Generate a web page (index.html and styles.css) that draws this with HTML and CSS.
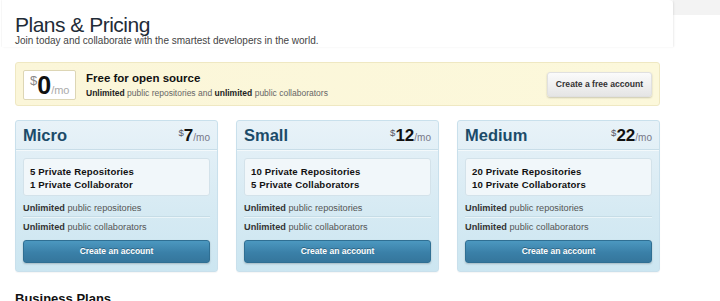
FILE: index.html
```html
<!DOCTYPE html>
<html>
<head>
<meta charset="utf-8">
<link rel="stylesheet" href="styles.css">
</head>
<body>
<div class="top">
  <div class="hero">
    <h1 class="title">Plans &amp; Pricing</h1>
    <p class="lead">Join today and collaborate with the smartest developers in the world.</p>
  </div>
  <div class="side"></div>
</div>

<div class="content">
  <div class="free">
    <div class="freeprice"><span class="cur">$</span><span class="amt">0</span><span class="per">/mo</span></div>
    <div class="freetext">
      <div class="freetitle">Free for open source</div>
      <div class="freesub"><b>Unlimited</b> public repositories and <b>unlimited</b> public collaborators</div>
    </div>
    <a class="btn-free">Create a free account</a>
  </div>

  <div class="plans">
    <div class="plan">
      <div class="plan-head"><span class="plan-name">Micro</span><span class="plan-price"><span class="cur">$</span><span class="amt">7</span><span class="per">/mo</span></span></div>
      <div class="features"><div>5 Private Repositories</div><div>1 Private Collaborator</div></div>
      <div class="row"><b>Unlimited</b> public repositories</div>
      <div class="row last"><b>Unlimited</b> public collaborators</div>
      <a class="btn-plan">Create an account</a>
    </div>
    <div class="plan">
      <div class="plan-head"><span class="plan-name">Small</span><span class="plan-price"><span class="cur">$</span><span class="amt">12</span><span class="per">/mo</span></span></div>
      <div class="features"><div>10 Private Repositories</div><div>5 Private Collaborators</div></div>
      <div class="row"><b>Unlimited</b> public repositories</div>
      <div class="row last"><b>Unlimited</b> public collaborators</div>
      <a class="btn-plan">Create an account</a>
    </div>
    <div class="plan">
      <div class="plan-head"><span class="plan-name">Medium</span><span class="plan-price"><span class="cur">$</span><span class="amt">22</span><span class="per">/mo</span></span></div>
      <div class="features"><div>20 Private Repositories</div><div>10 Private Collaborators</div></div>
      <div class="row"><b>Unlimited</b> public repositories</div>
      <div class="row last"><b>Unlimited</b> public collaborators</div>
      <a class="btn-plan">Create an account</a>
    </div>
  </div>

  <h2 class="biz">Business Plans</h2>
</div>
</body>
</html>
```
FILE: styles.css
```css
html, body {
  margin: 0;
  padding: 0;
  background: #fff;
  font-family: "Liberation Sans", Arial, sans-serif;
  color: #333;
  overflow: hidden;
}

.top {
  display: flex;
  height: 47px;
}

.hero {
  width: 671px;
  margin-left: 2px;
  padding-left: 13px;
  box-sizing: border-box;
  background: #fff;
  border-top-right-radius: 4px;
  box-shadow: 1px 0 2px rgba(0,0,0,0.08), -1px 0 1px rgba(0,0,0,0.03);
  position: relative;
  z-index: 1;
}

.side {
  flex: 1;
  background: #fff;
  border-top: 15px solid #f3f3f3;
  box-sizing: border-box;
}

.title {
  margin: 0;
  padding-top: 14px;
  font-size: 21px;
  line-height: 22px;
  font-weight: normal;
  color: #1f2c37;
  letter-spacing: -0.5px;
}

.lead {
  margin: -1px 0 0;
  font-size: 10px;
  line-height: 12px;
  color: #444;
}

.content {
  padding: 15px 60px 0 15px;
}

.free {
  display: flex;
  align-items: center;
  height: 44px;
  box-sizing: border-box;
  padding: 0 7px;
  background: linear-gradient(90deg, #fbf6d9, #fcf8db);
  border: 1px solid #efe8c2;
  border-radius: 3px;
}

.freeprice {
  width: 53px;
  height: 30px;
  box-sizing: border-box;
  margin-top: 1px;
  background: #fff;
  border: 1px solid #ddd6b5;
  border-radius: 2px;
  display: flex;
  align-items: flex-end;
  padding: 0 0 3px 6px;
  line-height: 1;
}
.freeprice .cur { font-size: 13px; color: #888; align-self: flex-start; margin-top: 3px; }
.freeprice .amt { font-size: 25px; font-weight: bold; color: #111; line-height: 22px; }
.freeprice .per { font-size: 11px; color: #aaa; }

.freetext {
  margin-left: 10px;
  flex: 1;
}
.freetitle {
  font-size: 11.5px;
  font-weight: bold;
  color: #111;
  line-height: 14px;
}
.freesub {
  font-size: 8.5px;
  color: #666;
  margin-top: 3px;
}
.freesub b { color: #222; }

.btn-free {
  display: block;
  width: 105px;
  height: 25px;
  box-sizing: border-box;
  line-height: 23px;
  text-align: center;
  font-size: 8.6px;
  font-weight: bold;
  color: #333;
  background: linear-gradient(#fbfbfb, #e5e5e5);
  border: 1px solid #e0e0e0;
  border-radius: 3px;
  box-shadow: 0 1px 2px rgba(0,0,0,0.2);
  margin-top: 1px;
}

.plans {
  display: flex;
  gap: 18px;
  margin-top: 14px;
}

.plan {
  width: 203px;
  height: 152px;
  box-sizing: border-box;
  background: linear-gradient(#e8f2f8, #d6eaf3 60%, #cce6f1);
  border: 1px solid #c9e0ec;
  border-radius: 3px;
  padding: 0 7px;
  box-shadow: 0 1px 1px rgba(0,0,0,0.04);
}

.plan-head {
  display: flex;
  justify-content: space-between;
  align-items: baseline;
  height: 29px;
  box-sizing: border-box;
  margin: 0 -7px;
  padding: 5px 7px 0;
  border-bottom: 1px solid #c8dde8;
  box-shadow: 0 1px 0 rgba(255,255,255,0.6);
}
.plan-name {
  font-size: 16.5px;
  font-weight: bold;
  color: #1c4b69;
}
.plan-price .cur { font-size: 9.5px; color: #556; vertical-align: 5px; }
.plan-price .amt { font-size: 17px; font-weight: bold; color: #111; }
.plan-price .per { font-size: 10px; color: #778; }

.features {
  margin-top: 8px;
  height: 38px;
  box-sizing: border-box;
  background: #f1f7fa;
  border: 1px solid #d3e2ea;
  border-radius: 3px;
  padding: 6px 6px 0;
  font-size: 9.6px;
  font-weight: bold;
  color: #111;
  line-height: 13px;
  letter-spacing: 0.15px;
}

.row {
  font-size: 9.2px;
  color: #555;
  height: 20px;
  line-height: 24px;
  border-bottom: 1px solid #c6dce6;
  box-shadow: 0 1px 0 rgba(255,255,255,0.5);
}
.row b { color: #333; }
.row.last {
  border-bottom: 0;
  box-shadow: none;
  line-height: 20px;
}

.btn-plan {
  display: block;
  margin-top: 3px;
  height: 23px;
  box-sizing: border-box;
  line-height: 21px;
  text-align: center;
  font-size: 8.5px;
  font-weight: bold;
  color: #fff;
  text-shadow: 0 -1px 0 rgba(0,0,0,0.3);
  background: linear-gradient(#4c98c0, #3a80a8 55%, #35769c);
  border: 1px solid #2f6f93;
  border-radius: 3px;
  box-shadow: 0 1px 2px rgba(0,0,0,0.2);
}

.biz {
  margin: 19px 0 0;
  font-size: 13px;
  font-weight: bold;
  color: #111;
}
```
